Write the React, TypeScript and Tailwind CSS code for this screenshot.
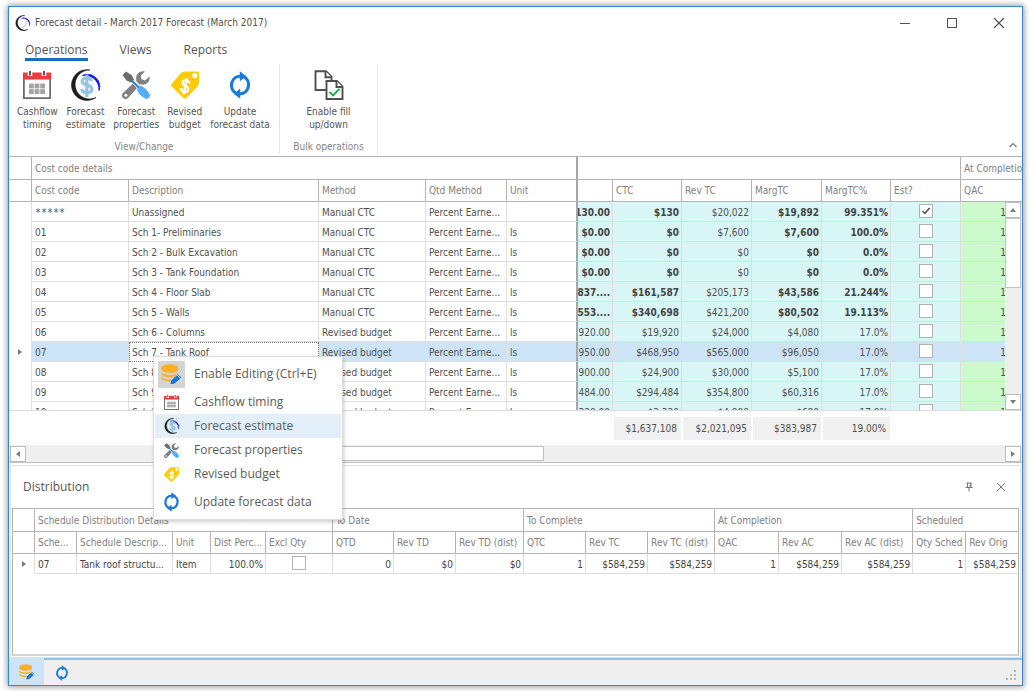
import type { ReactNode } from "react";

type IconProps = { className?: string };

function LogoIcon({ className, dollar = false }: IconProps & { dollar?: boolean }) {
  return (
    <svg viewBox="0 0 32 32" className={className} aria-hidden="true">
      <path d="M20 1A15.400 15.400 0 1 0 26 28.500A14.500 14.500 0 1 1 20 1Z" fill="#1c1c1c" stroke="#1c1c1c" strokeWidth="0.600" />
      <path d="M12.500 6.500A12.200 12.200 0 0 1 29 21.500A14 14 0 0 0 12.500 6.500Z" fill="#0a12ff" stroke="#0a12ff" strokeWidth="0.900" />
      {dollar ? (
        <path
          d="M21.600 12.200C21 9.800 19.100 9 16.900 9C14.200 9 12.200 10.300 12.200 12.600C12.200 17.700 22 14.600 22 20C22 22.400 19.800 23.700 16.900 23.700C14.100 23.700 12.100 22.500 11.600 20M16.900 5.500V28"
          fill="none"
          stroke="#93c4e2"
          strokeWidth="3.200"
        />
      ) : (
        <path d="M12 24C18 25 23 21 23 13" fill="none" stroke="#b5d6ea" strokeWidth="2.500" />
      )}
    </svg>
  );
}

function CalendarIcon({ className }: IconProps) {
  return (
    <svg viewBox="0 0 28 28" className={className} aria-hidden="true">
      <rect x="0.900" y="3" width="26.200" height="24.100" fill="#fff" stroke="#666" strokeWidth="1.700" />
      <rect x="0" y="1.500" width="28" height="7" fill="#ee3d3d" />
      <path d="M7 0V5M21 0V5" stroke="#fff" strokeWidth="4.600" />
      <path d="M7 0V4.500M21 0V4.500" stroke="#5a5a5a" strokeWidth="2" />
      <g fill="#a3a3a3">
        {[12.6, 18.2].map((y) =>
          [6, 11.6, 17.2].map((x) => <rect key={`${x}-${y}`} x={x} y={y} width="4.800" height="4.800" />),
        )}
      </g>
    </svg>
  );
}

function ToolsIcon({ className }: IconProps) {
  return (
    <svg viewBox="0 0 28 28" className={className} aria-hidden="true">
      <path
        d="M27.500 5.500L23 9.500L19.500 8.300L18.700 4.800L22.800 0.500C19 -0.300 15 2 14.300 5.500C14 7 14.200 8.200 14.500 9.300L1.200 21.700C-0.500 23.300 -0.300 25.700 1 27C2.500 28.400 4.900 28.300 6.300 26.800L18.500 13.300C23.500 14.800 28.600 11 27.500 5.500Z"
        fill="#808080"
      />
      <circle cx="3.900" cy="24.300" r="1.500" fill="#fff" />
      <path d="M9 8L18 17" stroke="#fff" strokeWidth="4.500" />
      <path d="M0.500 4L4 0.500L9.800 4.200L12 8.800L9.200 11.600L4.500 9.500Z" fill="#6b6b6b" />
      <path d="M9.500 9.500L18 17.500" stroke="#2d7fc4" strokeWidth="2.200" />
      <path d="M15 18.300L18.500 14.800C22 15.500 25 19 27.800 23.500C28.400 26 26 28.400 23.500 27.800C19 25.500 15.600 22 15 18.300Z" fill="#57adfd" />
    </svg>
  );
}

function TagIcon({ className }: IconProps) {
  return (
    <svg viewBox="0 0 28 28" className={className} aria-hidden="true">
      <path
        d="M10.500 1.500L13 0.500H26C27.300 0.500 28 1.200 28 2.500V12L26.500 15.500L15.500 27C14.500 28 13.500 28 12.500 27L0.800 15.800C-0.100 14.900 -0.100 14 0.500 13.100Z"
        fill="#ffcb08"
      />
      <circle cx="23.900" cy="4.600" r="2.600" fill="#fff" />
      <g transform="rotate(12 14 15)">
        <path
          d="M17.700 11.500C17.100 9.800 15.800 9.400 14.200 9.400C12.200 9.400 10.800 10.400 10.800 12.100C10.800 15.900 17.900 13.900 17.900 17.900C17.900 19.700 16.300 20.600 14.200 20.600C12.200 20.600 10.600 19.700 10.300 17.800M14.200 6.700V23.300"
          fill="none"
          stroke="#fff"
          strokeWidth="2.400"
        />
      </g>
    </svg>
  );
}

function RefreshIcon({ className }: IconProps) {
  return (
    <svg viewBox="0 0 24 28" className={className} aria-hidden="true">
      <path d="M8 22.300A9.300 9.300 0 0 1 12.500 5M16 5.700A9.300 9.300 0 0 1 11.500 23" fill="none" stroke="#1a7ad9" strokeWidth="3.200" />
      <path d="M11.800 0.300L18.300 5.200L11.800 10.200ZM12.200 17.800L5.700 22.800L12.200 27.700Z" fill="#1a7ad9" />
    </svg>
  );
}

function FillIcon({ className }: IconProps) {
  return (
    <svg viewBox="0 0 30 30" className={className} aria-hidden="true">
      <g fill="#fff" stroke="#4f4f4f" strokeWidth="1.900">
        <path d="M1.500 1.200H12L17.500 6.700V20H1.500Z" />
        <path d="M11.500 1.200V7.200H17.500" />
        <path d="M12.500 11H23L28.500 16.500V29H12.500Z" />
        <path d="M22.500 11V17H28.500" />
      </g>
      <path d="M15.500 21.800L19 25.500L25.500 18.800" fill="none" stroke="#16a83c" strokeWidth="1.900" />
    </svg>
  );
}

function DatabaseEditIcon({ className }: IconProps) {
  return (
    <svg viewBox="0 0 24 24" className={className} aria-hidden="true">
      <g fill="#fdb022">
        <ellipse cx="10" cy="4" rx="9.500" ry="3.800" />
        <path d="M0.500 4V6.500A9.500 3.600 0 0 0 19.500 6.500V4Z" />
        <path d="M0.500 9A9.500 3.600 0 0 0 19.500 9V11.500A9.500 3.600 0 0 1 0.500 11.500Z" />
        <path d="M0.500 14A9.500 3.600 0 0 0 19.500 14L12 19.800A9.500 3.600 0 0 1 0.500 16.500Z" />
      </g>
      <path d="M10 23.800L11.300 18.600L19.300 11.200L24 15.500L15.500 22.800Z" fill="#1d74d0" stroke="#fff" strokeWidth="0.700" />
      <path d="M18 12.300L22.700 16.700" stroke="#fff" strokeWidth="0.900" />
    </svg>
  );
}

function Arrow({ dir }: { dir: "up" | "down" | "left" | "right" }) {
  const d = { up: "M1 6L4 2L7 6Z", down: "M1 2L4 6L7 2Z", left: "M6 1L2 4L6 7Z", right: "M2 1L6 4L2 7Z" }[dir];
  return (
    <svg viewBox="0 0 8 8" className="size-2" aria-hidden="true">
      <path d={d} fill="#7c7c7c" />
    </svg>
  );
}

function ScrollButton({ dir }: { dir: "up" | "down" | "left" | "right" }) {
  return (
    <button aria-label={`Scroll ${dir}`} className="flex size-4 shrink-0 items-center justify-center border border-[#bdbdbd] bg-white">
      <Arrow dir={dir} />
    </button>
  );
}

function Check({ label, checked = false }: { label: string; checked?: boolean }) {
  return (
    <span className="relative mx-auto block size-[14px]">
      <input
        type="checkbox"
        aria-label={label}
        defaultChecked={checked}
        className="peer block size-[14px] appearance-none border border-[#b2b2b2] bg-white"
      />
      <svg viewBox="0 0 14 14" className="pointer-events-none absolute inset-0 hidden size-[14px] peer-checked:block" aria-hidden="true">
        <path d="M3.500 7L6 9.500L10.500 4" fill="none" stroke="#4a4a4a" strokeWidth="1.500" />
      </svg>
    </span>
  );
}

function RibbonButton({ icon, lines }: { icon: ReactNode; lines: [string, string] }) {
  return (
    <button className="flex shrink-0 flex-col items-center text-[10px] leading-[13px] whitespace-nowrap text-[#555]">
      <span className="mb-1 flex h-8 items-center justify-center">{icon}</span>
      <span>{lines[0]}</span>
      <span>{lines[1]}</span>
    </button>
  );
}

function RibbonGroup({ title, children, className }: { title: string; children: ReactNode; className: string }) {
  return (
    <div className={`flex h-[90px] flex-col border-r border-[#e4e4e4] pt-[5px] ${className}`}>
      <div className="flex gap-2 px-2">{children}</div>
      <div className="mt-2 text-center text-[10px] leading-4 text-[#858585]">{title}</div>
    </div>
  );
}

type CostRow = {
  code: string;
  description: string;
  method: string;
  unit: string;
  amount: string;
  ctc: string;
  rev: string;
  marg: string;
  pct: string;
  bold?: boolean;
  checked?: boolean;
  selected?: boolean;
};

const rows: CostRow[] = [
  { code: "*****", description: "Unassigned", method: "Manual CTC", unit: "", amount: "130.00", ctc: "$130", rev: "$20,022", marg: "$19,892", pct: "99.351%", bold: true, checked: true },
  { code: "01", description: "Sch 1- Preliminaries", method: "Manual CTC", unit: "ls", amount: "$0.00", ctc: "$0", rev: "$7,600", marg: "$7,600", pct: "100.0%", bold: true },
  { code: "02", description: "Sch 2 - Bulk Excavation", method: "Manual CTC", unit: "ls", amount: "$0.00", ctc: "$0", rev: "$0", marg: "$0", pct: "0.0%", bold: true },
  { code: "03", description: "Sch 3 - Tank Foundation", method: "Manual CTC", unit: "ls", amount: "$0.00", ctc: "$0", rev: "$0", marg: "$0", pct: "0.0%", bold: true },
  { code: "04", description: "Sch 4 - Floor Slab", method: "Manual CTC", unit: "ls", amount: "837....", ctc: "$161,587", rev: "$205,173", marg: "$43,586", pct: "21.244%", bold: true },
  { code: "05", description: "Sch 5 - Walls", method: "Manual CTC", unit: "ls", amount: "553....", ctc: "$340,698", rev: "$421,200", marg: "$80,502", pct: "19.113%", bold: true },
  { code: "06", description: "Sch 6 - Columns", method: "Revised budget", unit: "ls", amount: "920.00", ctc: "$19,920", rev: "$24,000", marg: "$4,080", pct: "17.0%" },
  { code: "07", description: "Sch 7 - Tank Roof", method: "Revised budget", unit: "ls", amount: "950.00", ctc: "$468,950", rev: "$565,000", marg: "$96,050", pct: "17.0%", selected: true },
  { code: "08", description: "Sch 8", method: "Revised budget", unit: "ls", amount: "900.00", ctc: "$24,900", rev: "$30,000", marg: "$5,100", pct: "17.0%" },
  { code: "09", description: "Sch 9", method: "Revised budget", unit: "ls", amount: "484.00", ctc: "$294,484", rev: "$354,800", marg: "$60,316", pct: "17.0%" },
  { code: "10", description: "Sch 10", method: "Revised budget", unit: "ls", amount: "320.00", ctc: "$3,320", rev: "$4,000", marg: "$680", pct: "17.0%" },
];

const headCell = "overflow-hidden border-r border-b border-[#b4b4b4] pt-px pl-[3px] text-left font-normal whitespace-nowrap text-[#808080]";
const textCell = "overflow-hidden border-r border-b border-[#dfdfdf] pt-[2px] pl-[3px] whitespace-nowrap";
const numCell = "overflow-hidden border-r border-b border-[#dfdfdf] pt-[2px] pr-[2px] text-right whitespace-nowrap";
const checkCell = "border-r border-b border-[#dfdfdf] pb-px";

function CostGrid() {
  return (
    <div className="relative h-[255px] overflow-hidden border-t border-b border-t-[#b4b4b4] border-b-[#dcdcdc]">
      <table className="w-full table-fixed border-separate border-spacing-0 text-[10px] leading-[14px] text-[#4f4f4f]">
        <colgroup>
          <col className="w-[23px]" />
          <col className="w-[97px]" />
          <col className="w-[190px]" />
          <col className="w-[107px]" />
          <col className="w-[81px]" />
          <col className="w-[71px]" />
          <col className="w-[35px]" />
          <col className="w-[69px]" />
          <col className="w-[70px]" />
          <col className="w-[70px]" />
          <col className="w-[69px]" />
          <col className="w-[70px]" />
          <col />
        </colgroup>
        <thead>
          <tr className="h-[23px]">
            <th className={headCell} />
            <th colSpan={5} className={`${headCell} border-r-2 border-r-[#a6a6a6]`}>Cost code details</th>
            <th colSpan={6} className={headCell} />
            <th className={`${headCell} border-r-0`}>At Completion</th>
          </tr>
          <tr className="h-[22px]">
            <th className={headCell} />
            <th className={headCell}>Cost code</th>
            <th className={headCell}>Description</th>
            <th className={headCell}>Method</th>
            <th className={headCell}>Qtd Method</th>
            <th className={`${headCell} border-r-2 border-r-[#a6a6a6]`}>Unit</th>
            <th className={headCell} />
            <th className={headCell}>CTC</th>
            <th className={headCell}>Rev TC</th>
            <th className={headCell}>MargTC</th>
            <th className={headCell}>MargTC%</th>
            <th className={headCell}>Est?</th>
            <th className={`${headCell} border-r-0`}>QAC</th>
          </tr>
        </thead>
        <tbody>
          {rows.map((r) => {
            const plain = r.selected ? "bg-[#cce4f6]" : "bg-white";
            const blue = r.selected ? "bg-[#cce4f6]" : "bg-[#d8f6f6]";
            const green = r.selected ? "bg-[#cce4f6]" : "bg-[#cdfacd]";
            const weight = r.bold ? "font-bold text-[#444]" : "";
            return (
              <tr key={r.code} className="h-5">
                <td className="border-r border-[#dfdfdf]">
                  {r.selected && <span className="flex justify-center"><Arrow dir="right" /></span>}
                </td>
                <td className={`${textCell} ${plain} ${r.code === "*****" ? "font-['DejaVu_Sans_Mono',monospace]" : ""}`}>{r.code}</td>
                <td className={`${textCell} ${r.selected ? "border-r-0 border-b-0 bg-white outline-1 -outline-offset-1 outline-dotted outline-[#777]" : plain}`}>
                  {r.description}
                </td>
                <td className={`${textCell} ${plain}`}>{r.method}</td>
                <td className={`${textCell} ${plain}`}>Percent Earne...</td>
                <td className={`${textCell} ${plain} border-r-2 border-r-[#a6a6a6]`}>{r.unit}</td>
                <td className={`${numCell} ${blue} ${weight}`}>
                  <span className="flex justify-end overflow-hidden">{r.amount}</span>
                </td>
                <td className={`${numCell} ${blue} ${weight}`}>{r.ctc}</td>
                <td className={`${numCell} ${blue}`}>{r.rev}</td>
                <td className={`${numCell} ${blue} ${weight}`}>{r.marg}</td>
                <td className={`${numCell} ${blue} ${weight}`}>{r.pct}</td>
                <td className={`${checkCell} ${blue}`}>
                  <Check label={`Estimate for ${r.code}`} checked={r.checked} />
                </td>
                <td className={`border-b border-[#dfdfdf] pt-[2px] pr-4 text-right ${green}`}>1</td>
              </tr>
            );
          })}
        </tbody>
      </table>
      <div className="absolute top-[45px] right-0 bottom-0 flex w-[17px] flex-col bg-[#efefef]">
        <ScrollButton dir="up" />
        <div className="h-[70px] w-4 border border-[#c4c4c4] bg-white" />
        <div className="flex-1" />
        <ScrollButton dir="down" />
      </div>
    </div>
  );
}

function Totals() {
  const box = "h-[23px] bg-[#f0f0f0] pr-1 text-right leading-[23px]";
  return (
    <div className="flex h-[34px] items-center gap-[2px] pl-[605px] text-[10px] text-[#4f4f4f]">
      <div className={`w-[67px] ${box}`}>$1,637,108</div>
      <div className={`w-[68px] ${box}`}>$2,021,095</div>
      <div className={`w-[68px] ${box}`}>$383,987</div>
      <div className={`w-[67px] ${box}`}>19.00%</div>
    </div>
  );
}

const bands = [
  { title: "Schedule Distribution Details", span: 5 },
  { title: "To Date", span: 3 },
  { title: "To Complete", span: 3 },
  { title: "At Completion", span: 3 },
];

const distHeads = ["Sche...", "Schedule Descrip...", "Unit", "Dist Perc...", "Excl Qty", "QTD", "Rev TD", "Rev TD (dist)", "QTC", "Rev TC", "Rev TC (dist)", "QAC", "Rev AC", "Rev AC (dist)", "Qty Sched"];
const distValues = ["0", "$0", "$0", "1", "$584,259", "$584,259", "1", "$584,259", "$584,259", "1"];

function Distribution() {
  return (
    <section className="mx-px mt-[2px] flex flex-1 flex-col border border-[#e2e2e2] px-px">
      <header className="flex h-[42px] items-center justify-between pr-3 pl-[11px]">
        <h2 className="font-['Open_Sans','Noto_Sans',sans-serif] text-[12px] text-[#555]">Distribution</h2>
        <div className="flex items-center gap-5">
          <button aria-label="Pin panel" className="flex size-3 items-center justify-center">
            <svg viewBox="0 0 10 10" className="size-[10px]" aria-hidden="true">
              <path d="M2.500 1H7.500M3.500 1V5M6.200 1V5M7 1V5M1.500 5.500H8.500M5 5.500V9.500" fill="none" stroke="#777" />
            </svg>
          </button>
          <button aria-label="Close panel" className="flex size-3 items-center justify-center">
            <svg viewBox="0 0 10 10" className="size-[10px]" aria-hidden="true">
              <path d="M1 1L9 9M9 1L1 9" stroke="#777" />
            </svg>
          </button>
        </div>
      </header>
      <div className="mb-px flex-1 overflow-hidden border border-b-2 border-[#b4b4b4] border-b-[#d4d4d4]">
        <table className="w-full table-fixed border-separate border-spacing-0 text-[10px] leading-[14px] text-[#444]">
          <colgroup>
            <col className="w-[22px]" />
            <col className="w-[42px]" />
            <col className="w-[96px]" />
            <col className="w-[38px]" />
            <col className="w-[55px]" />
            <col className="w-[67px]" />
            <col className="w-[61px]" />
            <col className="w-[62px]" />
            <col className="w-[68px]" />
            <col className="w-[62px]" />
            <col className="w-[62px]" />
            <col className="w-[67px]" />
            <col className="w-[64px]" />
            <col className="w-[63px]" />
            <col className="w-[71px]" />
            <col className="w-[53px]" />
            <col />
          </colgroup>
          <thead>
            <tr className="h-[23px]">
              <th className={headCell} />
              {bands.map((b) => (
                <th key={b.title} colSpan={b.span} className={headCell}>{b.title}</th>
              ))}
              <th colSpan={2} className={`${headCell} border-r-0`}>Scheduled</th>
            </tr>
            <tr className="h-[22px]">
              <th className={headCell} />
              {distHeads.map((h) => (
                <th key={h} className={headCell}>{h}</th>
              ))}
              <th className={`${headCell} border-r-0`}>Rev Orig</th>
            </tr>
          </thead>
          <tbody>
            <tr className="h-5">
              <td className="border-r border-[#dfdfdf]">
                <span className="flex justify-center"><Arrow dir="right" /></span>
              </td>
              <td className={textCell}>07</td>
              <td className={textCell}>Tank roof structu...</td>
              <td className={textCell}>Item</td>
              <td className={numCell}>100.0%</td>
              <td className={checkCell}><Check label="Exclude quantity" /></td>
              {distValues.map((v, i) => (
                <td key={i} className={numCell}>{v}</td>
              ))}
              <td className={`${numCell} border-r-0`}>$584,259</td>
            </tr>
          </tbody>
        </table>
      </div>
    </section>
  );
}

function ContextMenu() {
  const item = "flex w-full items-center text-left";
  const slot = "mr-[9px] ml-[3px] flex w-[27px] shrink-0 items-center justify-center";
  return (
    <div className="absolute top-[349px] left-[144px] w-[190px] border border-[#dcdcdc] bg-white p-px font-['Open_Sans','Noto_Sans',sans-serif] text-[12px] text-[#5a5a5a] shadow-[1px_2px_4px_rgba(0,0,0,0.2)]">
      <button className={`${item} h-8`}>
        <span className={`${slot} h-[27px] bg-[#d4d4d4]`}><DatabaseEditIcon className="size-[21px]" /></span>
        Enable Editing (Ctrl+E)
      </button>
      <button className={`${item} h-6`}>
        <span className={slot}><CalendarIcon className="size-[15px]" /></span>
        Cashflow timing
      </button>
      <button className={`${item} h-6 bg-[#e2eff8]`}>
        <span className={slot}><LogoIcon dollar className="size-4" /></span>
        Forecast estimate
      </button>
      <button className={`${item} h-6`}>
        <span className={slot}><ToolsIcon className="size-[15px]" /></span>
        Forecast properties
      </button>
      <button className={`${item} h-6`}>
        <span className={slot}><TagIcon className="size-[15px]" /></span>
        Revised budget
      </button>
      <button className={`${item} h-8`}>
        <span className={slot}><RefreshIcon className="h-5 w-[17px]" /></span>
        Update forecast data
      </button>
    </div>
  );
}

export default function App() {
  return (
    <div className="flex min-h-screen bg-white pt-[6px] pr-[13px] pb-[5px] pl-2 font-['DejaVu_Sans_Condensed','Noto_Sans',sans-serif]">
      <div className="relative flex min-w-0 flex-1 flex-col border border-[#3488cf] bg-white shadow-[0_0_6px_1px_rgba(0,0,0,0.4)]">
        <header className="flex h-[31px] items-center justify-between pr-[17px] pl-[6px]">
          <div className="flex items-center gap-1 text-[10px] text-[#4f4f4f]">
            <LogoIcon className="size-4" />
            <h1>Forecast detail - March 2017 Forecast (March 2017)</h1>
          </div>
          <div className="flex items-center gap-[35px] text-[#555]">
            <button aria-label="Minimize">
              <svg viewBox="0 0 12 12" className="size-3" aria-hidden="true"><path d="M1 6.500H11" stroke="currentColor" /></svg>
            </button>
            <button aria-label="Maximize">
              <svg viewBox="0 0 12 12" className="size-3" aria-hidden="true"><rect x="1.500" y="1.500" width="9" height="9" fill="none" stroke="currentColor" /></svg>
            </button>
            <button aria-label="Close">
              <svg viewBox="0 0 12 12" className="size-3" aria-hidden="true"><path d="M1 1L11 11M11 1L1 11" stroke="currentColor" strokeWidth="1.200" /></svg>
            </button>
          </div>
        </header>
        <nav className="flex gap-8 pt-1 pl-4 font-['Open_Sans','Noto_Sans',sans-serif] text-[12px] leading-4 text-[#555]">
          <button className="border-b-3 border-[#1570bd]">Operations</button>
          <button className="border-b-3 border-transparent">Views</button>
          <button className="border-b-3 border-transparent">Reports</button>
        </nav>
        <div className="flex h-[95px] pt-[3px]">
          <RibbonGroup title="View/Change" className="w-[271px]">
            <RibbonButton icon={<CalendarIcon className="size-7" />} lines={["Cashflow", "timing"]} />
            <RibbonButton icon={<LogoIcon dollar className="size-8" />} lines={["Forecast", "estimate"]} />
            <RibbonButton icon={<ToolsIcon className="size-7" />} lines={["Forecast", "properties"]} />
            <RibbonButton icon={<TagIcon className="size-7" />} lines={["Revised", "budget"]} />
            <RibbonButton icon={<RefreshIcon className="h-7 w-6" />} lines={["Update", "forecast data"]} />
          </RibbonGroup>
          <RibbonGroup title="Bulk operations" className="w-[98px] items-center">
            <RibbonButton icon={<FillIcon className="size-[30px]" />} lines={["Enable fill", "up/down"]} />
          </RibbonGroup>
          <button aria-label="Collapse ribbon" className="mr-[5px] mb-2 ml-auto self-end">
            <svg viewBox="0 0 8 6" className="h-[6px] w-2" aria-hidden="true"><path d="M0.500 5L4 1.500L7.500 5" fill="none" stroke="#777" strokeWidth="1.200" /></svg>
          </button>
        </div>
        <CostGrid />
        <Totals />
        <div className="flex h-[18px] items-center border-b border-[#c0c0c0] bg-[#efefef] px-px">
          <ScrollButton dir="left" />
          <div className="ml-[151px] h-[15px] w-[367px] border border-[#c0c0c0] bg-white" />
          <div className="flex-1" />
          <ScrollButton dir="right" />
        </div>
        <Distribution />
        <footer className="flex h-[27px] border-t-2 border-[#94bfe4] bg-[#efefef]">
          <button aria-label="Enable editing" className="-mt-[2px] flex w-[35px] items-center justify-center bg-[#cce4f7]">
            <DatabaseEditIcon className="size-4" />
          </button>
          <button aria-label="Refresh" className="flex w-9 items-center justify-center">
            <RefreshIcon className="h-4 w-[14px]" />
          </button>
          <svg viewBox="0 0 10 10" className="mr-[6px] mb-[5px] ml-auto size-[10px] self-end" aria-hidden="true">
            <path d="M8 0H10V2H8ZM4 4H6V6H4ZM8 4H10V6H8ZM0 8H2V10H0ZM4 8H6V10H4ZM8 8H10V10H8Z" fill="#b9b9b9" />
          </svg>
        </footer>
        <ContextMenu />
      </div>
    </div>
  );
}
